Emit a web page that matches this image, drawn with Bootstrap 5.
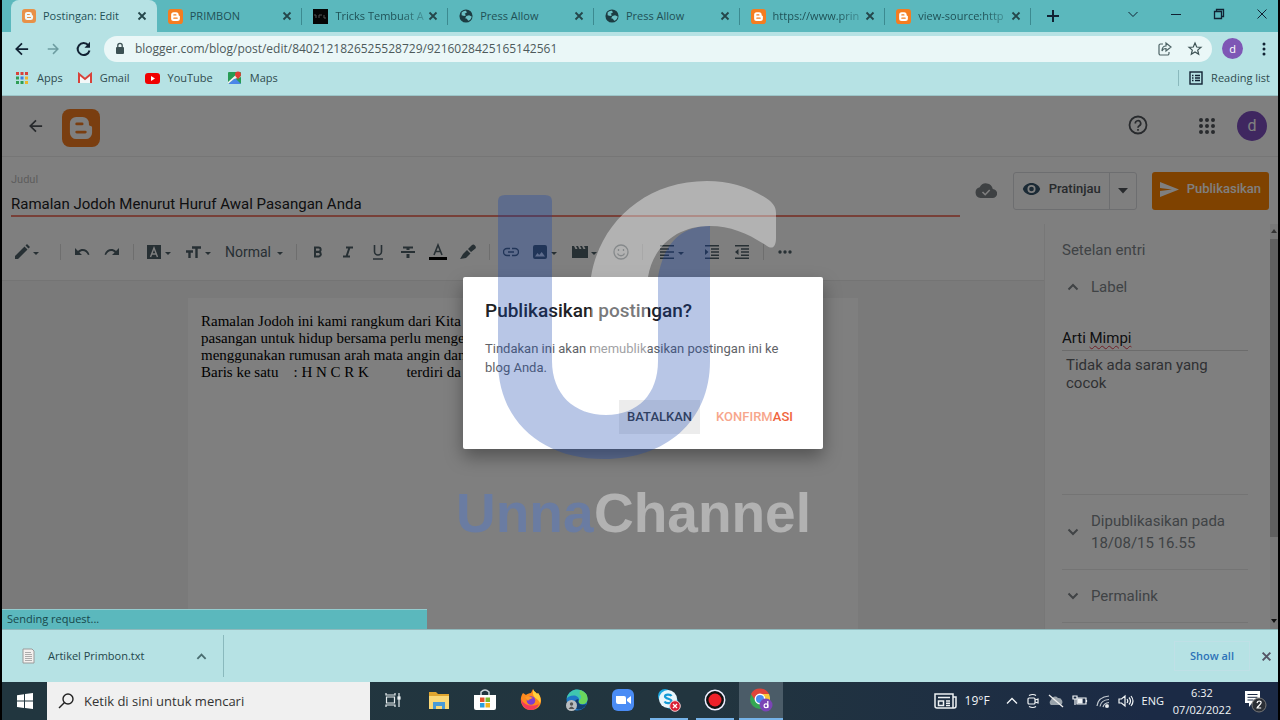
<!DOCTYPE html>
<html lang="id">
<head>
<meta charset="utf-8">
<meta name="viewport" content="width=device-width, initial-scale=1">
<title>Postingan: Edit</title>
<link href="https://cdn.jsdelivr.net/npm/bootstrap@5.3.0/dist/css/bootstrap.min.css" rel="stylesheet">
<style>
  body { background: #000; font-family: "Open Sans", "Noto Sans", sans-serif; font-size: 11px; line-height: 16px; color: #24474b; }
  button { background: none; border: 0; padding: 0; color: inherit; font: inherit; }
  svg { display: block; flex: none; }
  .screen { min-height: 100vh; padding: 0 2px; }

  /* browser chrome */
  .tabstrip { background: #5bb8bd; height: 32px; padding-left: 9px; }
  .tabset { flex: 0 1 1020px; min-width: 0; }
  .tab { flex: 1 1 0; min-width: 0; padding: 0 10px 0 11px; position: relative; }
  .tab.current { background: #b6e2e4; border-radius: 8px 8px 0 0; }
  .tab-sep::after { content: ""; position: absolute; right: 0; top: 8px; height: 17px; border-right: 1px solid #3c8a90; }
  .tab a { color: #1f5156; white-space: nowrap; flex: 1; margin-left: 7px; min-width: 0; }
  .tab .fade-end { -webkit-mask-image: linear-gradient(90deg, #000 70%, rgba(0,0,0,.2)); mask-image: linear-gradient(90deg, #000 70%, rgba(0,0,0,.2)); }
  .win { gap: 27px; padding: 0 8px 4px 0; color: #123; }
  .chrome-bar { background: #b6e2e4; }
  .toolbar { height: 33px; padding: 0 9px 0 12px; }
  .omnibox { height: 26px; border-radius: 13px; background: #eaf7f7; padding: 0 9px 0 10px; margin: 0 10px 0 12px; }
  .omnibox input { border: 0; background: none; outline: 0; font-size: 12px; color: #4d5a5b; padding: 0 0 0 9px; }
  .marks { height: 31px; padding: 0 8px 4px 13px; border-bottom: 1px solid #9cc5c8; gap: 15px; }
  .marks a { color: #2f4b4e; gap: 8px; }
  .marks .reading { border-left: 1px solid #8ab9bd; padding-left: 10px; }
  .face { border-radius: 50%; color: #fff; background: #7e57b5; width: 21px; height: 21px; }

  /* blogger */
  .blog { background: #fff; color: #50555a; font-family: Roboto, "Liberation Sans", sans-serif; min-height: 533px; }
  .blog-head { height: 61px; border-bottom: 1px solid #ececec; padding: 0 11px 0 26px; }
  .blog-head .face { width: 30px; height: 30px; background: #7e4fc0; font-size: 16px; }
  .title-row { height: 67px; padding: 0 9px; }
  .title-field { flex: 1; border-bottom: 2px solid #f08070; margin-bottom: 7px; margin-right: 15px; }
  .title-field label { font-size: 11px; color: #bbb; line-height: 14px; margin-top: 16px; }
  .title-field input { border: 0; outline: 0; background: none; font-size: 15px; line-height: 20px; color: #202124; padding: 0; margin-top: 7px; }
  .row-btn { height: 38px; border-radius: 3px; font-size: 13px; font-weight: 500; }
  .preview { border: 1px solid #dadce0; border-radius: 3px; }
  .preview .row-btn { height: 36px; }
  .preview .more { border-left: 1px solid #dadce0; width: 27px; height: 36px; }
  .publish { background: #ff8400; color: #fff; padding: 0 8px; gap: 8px; }
  .up { padding-bottom: 4px; }
  .tools { height: 57px; padding-left: 6px; color: #4f6069; border-bottom: 1px solid #e8e8e8; }
  .t { width: 30px; height: 30px; display: flex; align-items: center; justify-content: center; }
  .tw { width: 40px; height: 30px; display: flex; align-items: center; padding-left: 6px; gap: 3px; }
  .tn { width: 70px; height: 30px; display: flex; align-items: center; justify-content: space-between; padding: 0 7px 0 5px; font-size: 14px; }
  .sep { width: 1px; height: 16px; background: #dcdcdc; margin: 0 6px; }
  .caret { border: 3px solid transparent; border-top-color: currentColor; border-bottom: 0; width: 6px; margin-top: 3px; }
  .canvas { background: #f5f5f5; padding: 17px 186px 0 186px; }
  .sheet { background: #fff; flex: 1; padding: 15px 13px; font: 15px/17px "Liberation Serif", serif; color: #000; white-space: pre; overflow: hidden; }
  .side { width: 234px; border-left: 1px solid #eee; font-size: 15px; color: #80868b; }
  .side-in { padding: 0 22px 0 17px; flex: 1; }
  .side-in .item { gap: 12px; padding: 15px 0 15px 5px; line-height: 22px; }
  .line { border-top: 1px solid #e8e8e8; }
  .tags { color: #202124; line-height: 20px; border-bottom: 1px solid #d8d8d8; padding-bottom: 2px; margin-top: 15px; }
  .tags u { text-decoration: underline wavy #e04050 1px; text-underline-offset: 2px; }
  .hint { color: #5f6368; line-height: 18px; padding: 5px 4px 0; height: 143px; }
  .scroll { width: 8px; background: #f1f1f1; }
  .thumb { height: 298px; background: #c1c1c1; margin-top: 3px; }
  .shade { position: absolute; inset: 0; background: rgba(0,0,0,.5); padding-left: 6px; }
  .ask { width: 360px; background: #fff; border-radius: 2px; padding: 22px 22px 15px; box-shadow: 0 8px 18px rgba(0,0,0,.35); color: #5f6368; }
  .ask h1 { font-size: 19px; line-height: 24px; font-weight: 500; color: #202124; margin: 0 0 16px; }
  .ask p { font-size: 13px; line-height: 19px; margin: 0 0 23px; }
  .ask button { font-size: 13px; font-weight: 500; height: 34px; padding: 0 8px; }
  .ask .no { background: #ececec; color: #3c4043; }
  .ask .yes { color: #f0643c; }
  .ask .yes span { color: #f7a68c; }
  .status { position: absolute; left: 0; bottom: 0; width: 425px; max-width: 100%; height: 20px; background: #5bb8bd; border-top: 1px solid #93cdd0; color: #16474b; padding: 1px 5px; font-family: "Open Sans", sans-serif; }

  /* download shelf */
  .shelf { background: #b6e2e4; height: 53px; border-top: 1px solid #8fb9bc; }
  .shelf .file { width: 222px; height: 42px; border-right: 1px solid #8ab9bd; padding: 0 16px 0 20px; gap: 13px; }
  .shelf .all { color: #2c72b8; font-weight: 600; padding: 0 15px; height: 30px; border: 1px solid #bfe0e6; }

  /* taskbar */
  .task { height: 38px; background: linear-gradient(90deg, #21363f, #22353f 55%, #1b2a45 90%); color: #f2f5f7; }
  .start { width: 45px; }
  .find { width: 323px; background: #f0f0f0; color: #333; padding-left: 11px; gap: 10px; }
  .find input { border: 0; outline: 0; background: none; font-size: 13px; padding: 0; }
  .find input::placeholder { color: #333; opacity: 1; }
  .app { width: 46px; display: flex; align-items: center; justify-content: center; border-bottom: 2px solid transparent; }
  .app.open { border-color: #76b3e8; background-clip: padding-box; margin: 0 4px; width: 38px; }
  .app.front { margin: 0 1px; width: 44px; background: #4b5c68; }
  .tray { gap: 8px; padding-right: 10px; }
  .tray .clock { width: 60px; line-height: 17px; }

  .mark-layer { position: absolute; inset: 0; padding-right: 10px; pointer-events: none; }
  .mark-layer text { font: bold 55px "Liberation Sans", sans-serif; }
</style>
</head>
<body>
<svg width="0" height="0" class="position-absolute" aria-hidden="true">
  <defs>
    <symbol id="blogger" viewBox="0 0 24 24"><rect width="24" height="24" rx="5" fill="#f57d20"/><path fill="#fff" d="M9 5h4a4 4 0 0 1 4 4v.7c0 .7.4 1 1 1s1 .4 1 1V15a4 4 0 0 1-4 4H9a4 4 0 0 1-4-4V9a4 4 0 0 1 4-4z"/><path stroke="#f57d20" stroke-width="1.8" stroke-linecap="round" d="M9.3 9.4h3.4M9.3 14.6h5.4"/></symbol>
    <symbol id="globe" viewBox="0 0 16 16"><circle cx="8" cy="8" r="7.5" fill="#1c3c42"/><path fill="#6cc0c4" d="M3 4c2-2 4-2 5-2L9 4 6.500 5.500 8 7l-2 1-3-1zM8.500 8l3-1 3 1.500c0 2-2 4.500-4 5l-1.500-2.500-2-.5z"/></symbol>
    <symbol id="x" viewBox="0 0 10 10"><path d="M1.500 1.500l7 7M8.500 1.500l-7 7" stroke="currentColor" stroke-width="1.800"/></symbol>
    <symbol id="up" viewBox="0 0 12 12"><path d="M1.500 8.500L6 4l4.500 4.500" fill="none" stroke="currentColor" stroke-width="2"/></symbol>
    <symbol id="down" viewBox="0 0 12 12"><path d="M1.500 3.500L6 8l4.500-4.500" fill="none" stroke="currentColor" stroke-width="2"/></symbol>
    <symbol id="back" viewBox="0 0 16 16"><path d="M15 8H2M8 1.500L1.500 8 8 14.500" fill="none" stroke="currentColor" stroke-width="2"/></symbol>
  </defs>
</svg>

<div class="screen d-flex flex-column position-relative">

  <nav class="tabstrip d-flex justify-content-between" aria-label="Tab">
    <div class="d-flex flex-grow-1" style="min-width:0">
      <div class="tabset d-flex">
        <div class="tab current d-flex align-items-center"><svg width="14" height="14" opacity=".8"><use href="#blogger"/></svg><a href="#" class="text-decoration-none">Postingan: Edit</a><button aria-label="Tutup"><svg width="10" height="10"><use href="#x"/></svg></button></div>
        <div class="tab tab-sep d-flex align-items-center"><svg width="15" height="15"><use href="#blogger"/></svg><a href="#" class="text-decoration-none">PRIMBON</a><button aria-label="Tutup"><svg width="10" height="10"><use href="#x"/></svg></button></div>
        <div class="tab tab-sep d-flex align-items-center"><svg width="15" height="15"><rect width="15" height="15" fill="#050505"/><path d="M1 6h2v3M6 9V6h3M11 6v3h2" stroke="#555" fill="none"/></svg><a href="#" class="text-decoration-none fade-end">Tricks Tembuat A</a><button aria-label="Tutup"><svg width="10" height="10"><use href="#x"/></svg></button></div>
        <div class="tab tab-sep d-flex align-items-center"><svg width="14" height="14"><use href="#globe"/></svg><a href="#" class="text-decoration-none">Press Allow</a><button aria-label="Tutup"><svg width="10" height="10"><use href="#x"/></svg></button></div>
        <div class="tab tab-sep d-flex align-items-center"><svg width="14" height="14"><use href="#globe"/></svg><a href="#" class="text-decoration-none">Press Allow</a><button aria-label="Tutup"><svg width="10" height="10"><use href="#x"/></svg></button></div>
        <div class="tab tab-sep d-flex align-items-center"><svg width="15" height="15"><use href="#blogger"/></svg><a href="#" class="text-decoration-none fade-end">https://www.prin</a><button aria-label="Tutup"><svg width="10" height="10"><use href="#x"/></svg></button></div>
        <div class="tab tab-sep d-flex align-items-center"><svg width="15" height="15"><use href="#blogger"/></svg><a href="#" class="text-decoration-none fade-end">view-source:http</a><button aria-label="Tutup"><svg width="10" height="10"><use href="#x"/></svg></button></div>
      </div>
      <button class="ms-3" aria-label="Tab baru"><svg width="12" height="12"><path d="M6 0v12M0 6h12" stroke="#123" stroke-width="2"/></svg></button>
    </div>
    <div class="win d-flex align-items-center">
      <button aria-label="Cari tab"><svg width="16" height="16"><path d="M3.500 6L8 10.500 12.500 6" fill="none" stroke="currentColor"/></svg></button>
      <button aria-label="Kecilkan"><svg width="16" height="16"><path d="M3 8.500h10" stroke="currentColor"/></svg></button>
      <button aria-label="Pulihkan"><svg width="16" height="16"><path d="M3.500 5.500h7v7h-7zM5.500 5V3.500h7v7H11" fill="none" stroke="currentColor" stroke-width="1.300"/></svg></button>
      <button aria-label="Tutup"><svg width="16" height="16"><path d="M3.500 3.500l9 9M12.500 3.500l-9 9" stroke="currentColor"/></svg></button>
    </div>
  </nav>

  <div class="chrome-bar">
    <div class="toolbar d-flex align-items-center">
      <button aria-label="Kembali"><svg width="16" height="14"><use href="#back" style="color:#123"/></svg></button>
      <button class="ms-3" aria-label="Maju"><svg width="14" height="12" viewBox="0 0 16 16"><path d="M1 8h13M8 1.500L14.500 8 8 14.500" fill="none" stroke="#6d9da1" stroke-width="2"/></svg></button>
      <button class="ms-3" aria-label="Muat ulang"><svg width="16" height="16"><path d="M13.500 9.500a6 6 0 1 1-1.200-5.300" fill="none" stroke="#123" stroke-width="2"/><path d="M14 .8v6H8.500z" fill="#123"/></svg></button>
      <div class="omnibox d-flex align-items-center flex-grow-1">
        <svg width="12" height="14"><rect x="2" y="5" width="8" height="7" rx="1" fill="#3d5254"/><path d="M3.800 5V3.500a2.200 2.200 0 0 1 4.400 0V5" fill="none" stroke="#3d5254" stroke-width="1.300"/></svg>
        <input class="flex-grow-1" aria-label="Alamat" value="blogger.com/blog/post/edit/8402121826525528729/9216028425165142561">
        <button aria-label="Bagikan"><svg width="16" height="16" fill="none" stroke="#4d6365" stroke-width="1.200"><path d="M6 3H3.500a1.500 1.500 0 0 0-1.500 1.500v8A1.500 1.500 0 0 0 3.500 14h7a1.500 1.500 0 0 0 1.500-1.500V11"/><path d="M9 5V2l5 4-5 4V7.500C7 7.500 5.500 8.500 5 10c0-3 1.500-5 4-5z"/></svg></button>
        <button style="margin-left:14px" aria-label="Bookmark"><svg width="16" height="16"><path d="M8 2l1.700 4 4.300.3-3.300 2.800 1 4.200L8 11l-3.700 2.300 1-4.200L2 6.300 6.300 6z" fill="none" stroke="#3d5254" stroke-width="1.200"/></svg></button>
      </div>
      <button class="face" aria-label="Profil">d</button>
      <button class="ms-3" aria-label="Menu"><svg width="10" height="16" fill="#123"><circle cx="5" cy="3" r="1.500"/><circle cx="5" cy="8" r="1.500"/><circle cx="5" cy="13" r="1.500"/></svg></button>
    </div>
    <div class="marks d-flex align-items-center">
      <a href="#" class="d-flex align-items-center text-decoration-none"><svg width="14" height="14"><path d="M1 2.500h12" stroke="#d8433a" stroke-width="3" stroke-dasharray="3 1.500"/><path d="M1 7h3" stroke="#2f9e55" stroke-width="3"/><path d="M5.500 7h3" stroke="#3f7fe0" stroke-width="3"/><path d="M10 7h3M10 11.500h3" stroke="#edb52d" stroke-width="3"/><path d="M1 11.500h7.500" stroke="#2f9e55" stroke-width="3" stroke-dasharray="3 1.500"/></svg>Apps</a>
      <a href="#" class="d-flex align-items-center text-decoration-none"><svg width="14" height="12"><path d="M1 11V2l6 5 6-5v9" fill="#f3f8f8" stroke="#d8433a" stroke-width="2"/></svg>Gmail</a>
      <a href="#" class="d-flex align-items-center text-decoration-none"><svg width="15" height="11"><rect width="15" height="11" rx="3" fill="#f00000"/><path d="M6 3l4 2.500L6 8z" fill="#fff"/></svg>YouTube</a>
      <a href="#" class="d-flex align-items-center text-decoration-none"><svg width="14" height="14"><rect y="1" width="13" height="12" rx="1" fill="#279b54"/><path d="M0 13L7 7l6 6z" fill="#4b86e8"/><path d="M0 11L10 2l3 4-7 2-6 5z" fill="#f2f2f2"/><path d="M10 9c0-2-3-3-3-5.500a3 3 0 0 1 6 0C13 6 10 7 10 9z" fill="#dd3f35"/></svg>Maps</a>
      <a href="#" class="reading d-flex align-items-center text-decoration-none ms-auto"><svg width="14" height="14"><rect x="1" y="1" width="12" height="12" fill="none" stroke="#123" stroke-width="1.400"/><path d="M3 4.500h1.500M6 4.500h5M3 7h1.500M6 7h5M3 9.500h1.500M6 9.500h5" stroke="#123" stroke-width="1.300"/></svg>Reading list</a>
    </div>
  </div>

  <main class="blog flex-grow-1 d-flex flex-column position-relative">
    <header class="blog-head d-flex align-items-center">
      <button aria-label="Kembali"><svg width="16" height="14"><use href="#back"/></svg></button>
      <svg width="38" height="38" class="mt-1" style="margin-left:18px"><use href="#blogger"/></svg>
      <button class="ms-auto" aria-label="Bantuan"><svg width="20" height="22"><circle cx="10" cy="10" r="8.500" fill="none" stroke="currentColor" stroke-width="1.800"/><path d="M7.300 8.500a2.700 2.700 0 1 1 4 2.300c-.9.500-1.300.9-1.300 2M10 14v1.800" fill="none" stroke="currentColor" stroke-width="1.700"/></svg></button>
      <button style="margin:0 22px 0 51px" aria-label="Aplikasi Google"><svg width="16" height="16" stroke="currentColor" stroke-width="4" stroke-linecap="round" stroke-dasharray="0 6"><path d="M2 2h13M2 8h13M2 14h13"/></svg></button>
      <button class="face" aria-label="Akun">d</button>
    </header>

    <div class="title-row d-flex">
      <div class="title-field d-flex flex-column">
        <label for="judul">Judul</label>
        <input id="judul" value="Ramalan Jodoh Menurut Huruf Awal Pasangan Anda">
      </div>
      <div class="d-flex" style="padding-top:15px">
        <svg width="22" height="38" class="me-3" viewBox="0 -11 22 38"><path fill="#7d8286" d="M17.800 6A7 7 0 0 0 4.700 4.200 5.500 5.500 0 0 0 5.500 15h12a4.500 4.500 0 0 0 .3-9z"/><path d="M7.500 9l2.700 2.700 4.500-4.700" fill="none" stroke="#fff" stroke-width="1.600"/></svg>
        <div class="preview d-flex align-self-start" style="margin-right:15px">
          <button class="row-btn d-flex align-items-center gap-2 px-2 up"><svg width="19" height="14" viewBox="0 0 19 14"><path fill="#36556b" d="M9.500 1C5.500 1 2 3.500.8 7c1.200 3.500 4.700 6 8.700 6s7.500-2.500 8.700-6C17 3.500 13.500 1 9.500 1z"/><circle cx="9.500" cy="7" r="3.200" fill="#36556b" stroke="#fff" stroke-width="1.700"/></svg>Pratinjau</button>
          <button class="more d-flex align-items-center justify-content-center" aria-label="Opsi pratinjau"><svg width="10" height="6"><path d="M0 0h10L5 5.500z" fill="currentColor"/></svg></button>
        </div>
        <button class="row-btn publish d-flex align-items-center align-self-start up"><svg width="19" height="15"><path d="M0 15l19-7.500L0 0v6l12 1.500L0 9z" fill="#fff"/></svg>Publikasikan</button>
      </div>
    </div>

    <div class="d-flex flex-grow-1">
      <section class="d-flex flex-column flex-grow-1" style="min-width:0">
        <div class="tools d-flex align-items-center">
          <button class="tw" aria-label="Mode"><svg width="16" height="16"><path d="M1 15v-3L10.500 2.500l3 3L4 15zM11.500 1.500L13 0l3 3-1.500 1.500z" fill="currentColor"/></svg><span class="caret"></span></button>
          <span class="sep" style="margin-left:12px"></span>
          <button class="t" aria-label="Urungkan"><svg width="16" height="12"><path d="M1 2v7h7L5.400 6.400C8.500 4 12 5 14 9l1.500-.6C13.500 3 8 1.500 4 5z" fill="currentColor"/></svg></button>
          <button class="t" aria-label="Ulangi"><svg width="16" height="12"><path d="M15 2v7H8l2.600-2.600C7.500 4 4 5 2 9L.5 8.400C2.500 3 8 1.500 12 5z" fill="currentColor"/></svg></button>
          <span class="sep"></span>
          <button class="tw" aria-label="Jenis font"><svg width="16" height="16"><rect x="1" y="1" width="14" height="14" fill="currentColor"/><path d="M4.500 13L8 4l3.500 9M5.800 10h4.400" fill="none" stroke="#fff" stroke-width="1.400"/></svg><span class="caret"></span></button>
          <button class="tw" aria-label="Ukuran font"><svg width="16" height="16"><path d="M6 3.500h9M10.500 3v11M0 7.500h7M3.500 7.500V14" stroke="currentColor" stroke-width="2.400"/></svg><span class="caret"></span></button>
          <button class="tn">Normal <span class="caret"></span></button>
          <span class="sep"></span>
          <button class="t" aria-label="Tebal"><svg width="12" height="14"><path d="M3 2.500h3.500a2.100 2.100 0 0 1 0 4.300H3zM3 7h4a2.300 2.300 0 0 1 0 4.500H3z" fill="none" stroke="currentColor" stroke-width="2"/></svg></button>
          <button class="t" aria-label="Miring"><svg width="12" height="14"><path d="M4 2.500h7M1 11.500h7M7.500 2.500l-3 9" stroke="currentColor" stroke-width="2"/></svg></button>
          <button class="t" aria-label="Garis bawah"><svg width="12" height="16"><path d="M2.500 1v6.500a3.500 3.500 0 0 0 7 0V1M1 15h10" fill="none" stroke="currentColor" stroke-width="1.600"/></svg></button>
          <button class="t" aria-label="Coret"><svg width="16" height="16"><path d="M3 3.500h10M1 8h14" stroke="currentColor" stroke-width="2"/><path d="M8 3v3M8 10v4" stroke="currentColor" stroke-width="3"/></svg></button>
          <button class="t" aria-label="Warna teks"><svg width="18" height="18"><path d="M5 12l4-10 4 10M6.500 8.500h5" fill="none" stroke="currentColor" stroke-width="1.600"/><path d="M0 15.500h18" stroke="#000" stroke-width="3"/></svg></button>
          <button class="t" aria-label="Sorot"><svg width="18" height="16"><path d="M9 5l4-4q1.500-1 3 .5t.5 3L12 8zM8 6l3.500 3.500L7 14l-6 1 3-5z" fill="currentColor"/></svg></button>
          <span class="sep"></span>
          <button class="t" aria-label="Tautan"><svg width="16" height="10" fill="none" stroke="currentColor" stroke-width="1.400"><path d="M7 1.500H4a3.500 3.500 0 0 0 0 7h3M9 1.500h3a3.500 3.500 0 0 1 0 7H9M5 5h6"/></svg></button>
          <button class="tw" aria-label="Gambar"><svg width="16" height="16"><path d="M3 1h10a2 2 0 0 1 2 2v10a2 2 0 0 1-2 2H3a2 2 0 0 1-2-2V3a2 2 0 0 1 2-2zM3 12.500h10L9.700 8 7.200 11 5.500 9z" fill="currentColor" fill-rule="evenodd"/></svg><span class="caret"></span></button>
          <button class="tw" aria-label="Video"><svg width="16" height="16"><path d="M0 2h2l1.500 3h2L4 2h2l1.500 3h2L8 2h2l1.500 3h2L12 2h4v12H0z" fill="currentColor"/></svg><span class="caret"></span></button>
          <button class="t" aria-label="Emoji"><svg width="16" height="16" fill="none" stroke="#6b777d" stroke-width="1.300"><circle cx="8" cy="8" r="7"/><path d="M4.500 9.500c1.500 3 5.500 3 7 0M5.500 5v2M10.500 5v2"/></svg></button>
          <span class="sep"></span>
          <button class="tw ms-1" aria-label="Perataan"><svg width="16" height="16"><path d="M1 1.800h14M1 5h9M1 8h14M1 11.200h9M1 14.300h14" stroke="currentColor" stroke-width="1.500"/></svg><span class="caret"></span></button>
          <button class="t ms-1" aria-label="Tambah indentasi"><svg width="16" height="16"><path d="M1 1.800h14M7 5h8M7 8h8M7 11.200h8M1 14.300h14" stroke="currentColor" stroke-width="1.500"/><path d="M1 5l3.500 3L1 11z" fill="currentColor"/></svg></button>
          <button class="t" aria-label="Kurangi indentasi"><svg width="16" height="16"><path d="M1 1.800h14M7 5h8M7 8h8M7 11.200h8M1 14.300h14" stroke="currentColor" stroke-width="1.500"/><path d="M4.500 5L1 8l3.500 3z" fill="currentColor"/></svg></button>
          <span class="sep"></span>
          <button class="t" aria-label="Lainnya"><svg width="14" height="4" fill="currentColor"><circle cx="2" cy="2" r="1.700"/><circle cx="7" cy="2" r="1.700"/><circle cx="12" cy="2" r="1.700"/></svg></button>
        </div>
        <div class="canvas d-flex flex-grow-1">
          <article class="sheet" contenteditable="true" spellcheck="false">Ramalan Jodoh ini kami rangkum dari Kita
pasangan untuk hidup bersama perlu menge
menggunakan rumusan arah mata angin dan
Baris ke satu    : H N C R K          terdiri da</article>
        </div>
      </section>

      <aside class="side d-flex">
        <div class="side-in">
          <div style="line-height:22px;padding-top:15px">Setelan entri</div>
          <div class="item d-flex align-items-center"><svg width="12" height="12"><use href="#up"/></svg>Label</div>
          <div class="tags" contenteditable="true" role="textbox" aria-label="Label" spellcheck="false">Arti <u>Mimpi</u></div>
          <div class="hint">Tidak ada saran yang cocok</div>
          <div class="line item d-flex align-items-center"><svg width="12" height="12"><use href="#down"/></svg>Dipublikasikan pada 18/08/15 16.55</div>
          <div class="line item d-flex align-items-center"><svg width="12" height="12"><use href="#down"/></svg>Permalink</div>
          <div class="line"></div>
        </div>
        <div class="scroll d-flex flex-column align-items-center">
          <svg width="8" height="12"><path d="M1 9l3-4 3 4z" fill="#666"/></svg>
          <div class="thumb w-100"></div>
          <svg width="8" height="14" class="mt-auto"><path d="M1 4h6L4 8z" fill="#222"/></svg>
        </div>
      </aside>
    </div>

    <div class="shade d-flex align-items-center justify-content-center">
      <div class="ask" role="dialog" aria-labelledby="ask-title">
        <h1 id="ask-title">Publikasikan postingan?</h1>
        <p>Tindakan ini akan memublikasikan postingan ini ke blog Anda.</p>
        <div class="d-flex justify-content-end gap-2">
          <button class="no">BATALKAN</button>
          <button class="yes"><span>KONFIRM</span>ASI</button>
        </div>
      </div>
    </div>
    <div class="status">Sending request...</div>
  </main>

  <div class="shelf d-flex align-items-center">
    <div class="file d-flex align-items-center">
      <svg width="13" height="16"><path d="M1 1h9l2 2v12H1z" fill="#f4f0ee" stroke="#9a9a9a"/><path d="M3 4.500h6M3 6.500h7M3 8.500h7M3 10.500h7M3 12.500h7" stroke="#999" stroke-width=".8"/></svg>
      <span>Artikel Primbon.txt</span>
      <button class="ms-auto" aria-label="Opsi unduhan"><svg width="11" height="11" style="color:#4a6d70"><use href="#up"/></svg></button>
    </div>
    <button class="all ms-auto">Show all</button>
    <button style="margin:0 6px 0 11px" aria-label="Tutup"><svg width="11" height="11" style="color:#556"><use href="#x"/></svg></button>
  </div>

  <footer class="task d-flex">
    <button class="start d-flex align-items-center justify-content-center" aria-label="Mulai"><svg width="16" height="16" fill="#fff"><path d="M0 2.300L7 1.200v6.400H0zM8 1l8-1v7.600H8zM0 8.500h7V15l-7-1.100zM8 8.500h8V16l-8-1z"/></svg></button>
    <div class="find d-flex align-items-center"><svg width="16" height="16" fill="none" stroke="#222" stroke-width="1.400"><circle cx="10" cy="6" r="5"/><path d="M6.500 9.500L1 15"/></svg><input class="flex-grow-1" aria-label="Cari" placeholder="Ketik di sini untuk mencari"></div>
    <button class="app" aria-label="Tampilan tugas"><svg width="16" height="16" fill="none" stroke="#e8eef0" stroke-width="1.200"><path d="M1 1v2h9V1M1 15v-2h9v2M1.500 5h8v6h-8zM14 1v14"/><rect x="13" y="5" width="2" height="2" fill="#fff"/></svg></button>
    <button class="app" aria-label="File Explorer"><svg width="22" height="20"><path d="M1 2h7l2 2h11v15H1z" fill="#e0a52f"/><path d="M1 6h20v13H1z" fill="#fbd877"/><path d="M5 19v-7h12v7h-3v-3H8v3z" fill="#4a9ad6"/></svg></button>
    <button class="app" aria-label="Store"><svg width="22" height="22"><path d="M7 6V3q4-4 8 0v3" fill="none" stroke="#ccd5da" stroke-width="1.500"/><path d="M0 6h22v13q0 2-2 2H2q-2 0-2-2z" fill="#fff"/><path d="M6 8.500h4.500V13H6z" fill="#e2502a"/><path d="M11.500 8.500H16V13h-4.500z" fill="#7cb82f"/><path d="M6 14h4.500v4.500H6z" fill="#2a9fe0"/><path d="M11.500 14H16v4.500h-4.500z" fill="#f4b51e"/></svg></button>
    <button class="app" aria-label="Firefox"><svg width="22" height="22"><path d="M3 4l3 2c1-1 3-2 5-2l2-4c1 3 3 3 4 5l1-1c6 7 3 17-7 17C2 21-2 11 3 4z" fill="#ff8a1e"/><path d="M1 10c3 7 12 8 18 5-2 4-5 6-8 6C5 21 1 16 1 10z" fill="#f23c5c"/><path d="M13 0c1 3 3 3 4 5l1-1c3 4 3 8 2 10-2-5-6-4-7-9z" fill="#ffd23e"/><circle cx="11" cy="11.500" r="4.300" fill="#7b3fd0"/><path d="M5 8c4-2 6 0 8 1-2 1-4 1-5 3z" fill="#ff9a2a"/></svg></button>
    <button class="app" aria-label="Edge"><svg width="24" height="22"><circle cx="12" cy="11" r="10.500" fill="#1e78c8"/><path d="M1.500 10C3 3 8 .5 12 .5c6 0 10.500 4 10.500 9 0 4-3 5.500-5.500 5.500-3 0-4-1.500-3-3C15 9 12 6.500 9 6.500 5 6.500 2.500 8 1.500 10z" fill="#3fc7b0"/><path d="M15 1q8 3 7.500 9t-6 5-2-4 0-6z" fill="#6bd65c"/><path d="M13.500 10c-1 5 3 7 8 5-3 6-8 6-10 5-5-3-3-9 2-10z" fill="#133f6d"/><circle cx="6.500" cy="16.500" r="5.500" fill="#b9bdc0"/><circle cx="6.500" cy="15" r="1.700" fill="#555"/><path d="M3.500 20q3-5 6 0z" fill="#555"/></svg></button>
    <button class="app" aria-label="Zoom"><svg width="22" height="22"><rect width="22" height="22" rx="6" fill="#4a8cf5"/><path d="M4 7h8q2 0 2 2v6H6q-2 0-2-2zM15 10l4-3v8l-4-3z" fill="#fff"/></svg></button>
    <button class="app open" aria-label="Skype"><svg width="24" height="24"><circle cx="8" cy="8" r="7" fill="#1ca8e0"/><circle cx="14" cy="14" r="7" fill="#1ca8e0"/><circle cx="11" cy="11" r="9" fill="#e9f6fb"/><path d="M14.500 8c-1-2-6.500-2-6.500.5s6.500 2 6.500 4.500-5.500 3-7 .5" fill="none" stroke="#159bd6" stroke-width="2.200"/><circle cx="18" cy="18" r="5.300" fill="#d92136" stroke="#f0cfd2"/><path d="M16 16l4 4M20 16l-4 4" stroke="#fff" stroke-width="1.300"/></svg></button>
    <button class="app open" aria-label="Perekam"><svg width="22" height="22"><circle cx="11" cy="11" r="9.700" fill="#111" stroke="#eef" stroke-width="1.500"/><circle cx="11" cy="11" r="6.500" fill="#ee2029"/></svg></button>
    <button class="app front open" aria-label="Chrome"><svg width="24" height="24"><circle cx="11" cy="11" r="10" fill="#34a853"/><path d="M2 6a10.200 10.200 0 0 1 18 0l-9 0-4.500 7z" fill="#e0443a"/><path d="M20 6q3 8-3 13l-6-1 5-8-4-4z" fill="#f7c83a"/><circle cx="11" cy="11" r="4.700" fill="#4a8af0" stroke="#fff" stroke-width="1.400"/><circle cx="17" cy="17" r="6.500" fill="#7a45b5"/><path d="M18.800 13v7" stroke="#fff" stroke-width="1.200"/><circle cx="17" cy="17.800" r="1.900" fill="none" stroke="#fff" stroke-width="1.200"/></svg></button>
    <div class="tray d-flex align-items-center ms-auto">
      <svg width="23" height="17" fill="none" stroke="#eef2f4" stroke-width="1.500"><path d="M1 1h18v14H3q-2 0-2-2zM19 4h3v9q0 2-2 2h-2M4 4.500h12"/><path d="M4.500 8h5v4.500h-5zM12 8h4M12 10.300h4M12 12.500h4"/></svg>
      <span style="font-size:12px">19°F</span>
      <button class="ms-2" aria-label="Ikon tersembunyi"><svg width="12" height="12"><path d="M1 8.500L6 3.500l5 5" fill="none" stroke="currentColor" stroke-width="1.300"/></svg></button>
      <svg width="14" height="16" fill="none" stroke="currentColor" stroke-width="1.200"><rect x="2" y="5" width="7" height="6" rx="1"/><path d="M9 7l3-1v4L9 9M3 2.500q4-2 7 0M3 13.500q4 2 7 0"/></svg>
      <svg width="16" height="14"><path d="M3 11a3 3 0 0 1 0-5 4 4 0 0 1 7-2 4 4 0 0 1 3 7z" fill="#9aa3ab"/><path d="M1 1l14 12" stroke="#eee" stroke-width="1.300"/></svg>
      <svg width="16" height="12" fill="none" stroke="currentColor" stroke-width="1.200"><path d="M5 3h9v6H5zM14.500 5v2M1 1h4v3H1zM3 4v6"/><path d="M6 4h4v4H6z" fill="currentColor"/></svg>
      <svg width="14" height="14" fill="none" stroke="#c2c9d0" stroke-width="1.200"><path d="M1 12Q2 3 13 2M4 12.500Q5 6 13 5.500M7 13q1-4 6-4.500"/><circle cx="11" cy="12" r="1.500" fill="#fff"/></svg>
      <svg width="16" height="14" fill="none" stroke="currentColor" stroke-width="1.200"><path d="M1 5h2.500L7 2v10L3.500 9H1zM9 5q1.500 2 0 4M11 3.500q3 3.500 0 7M13 2q4 5 0 10"/></svg>
      <span>ENG</span>
      <div class="clock text-center">6:32<br>07/02/2022</div>
      <button aria-label="Notifikasi" class="ms-1"><svg width="24" height="26"><path d="M1 3h15v12H8l-3 4v-4H1z" fill="#fff"/><path d="M3.500 6.500h10M3.500 9.300h10M3.500 12h6" stroke="#1b2a45"/><circle cx="15" cy="17" r="7" fill="#2b2f36" stroke="#777"/><path d="M13 15q.5-2 2.200-2 2 0 1.900 1.800c0 1.500-3.500 3.500-4 5.200H17.200" fill="none" stroke="#fff" stroke-width="1.200"/></svg></button>
    </div>
  </footer>

  <div class="mark-layer d-flex align-items-center justify-content-center">
    <svg width="360" height="370">
      <path fill="rgba(20,66,173,.3)" d="M43 26q0-6 7-6h40q7 0 7 6V186c0 33 22 54 54 54s52-21 52-54V102C209 68 226 51 255 51V186c0 61-45 98-106 98S43 247 43 186z"/>
      <path fill="rgba(255,255,255,.4)" d="M136 102C144 50 188 6 252 6c22 0 42 6 59 17 6 4 10 8 10 15v25c0 8-3 12-9 8-18-12-36-20-57-20-34 0-57 21-62 51v84h-57z"/>
      <text x="1" y="357" fill="rgba(75,120,215,.4)">Unna</text><text x="139" y="357" fill="rgba(255,255,255,.4)">Channel</text>
    </svg>
  </div>
</div>
<script src="https://cdn.jsdelivr.net/npm/bootstrap@5.3.0/dist/js/bootstrap.bundle.min.js"></script>
</body>
</html>
